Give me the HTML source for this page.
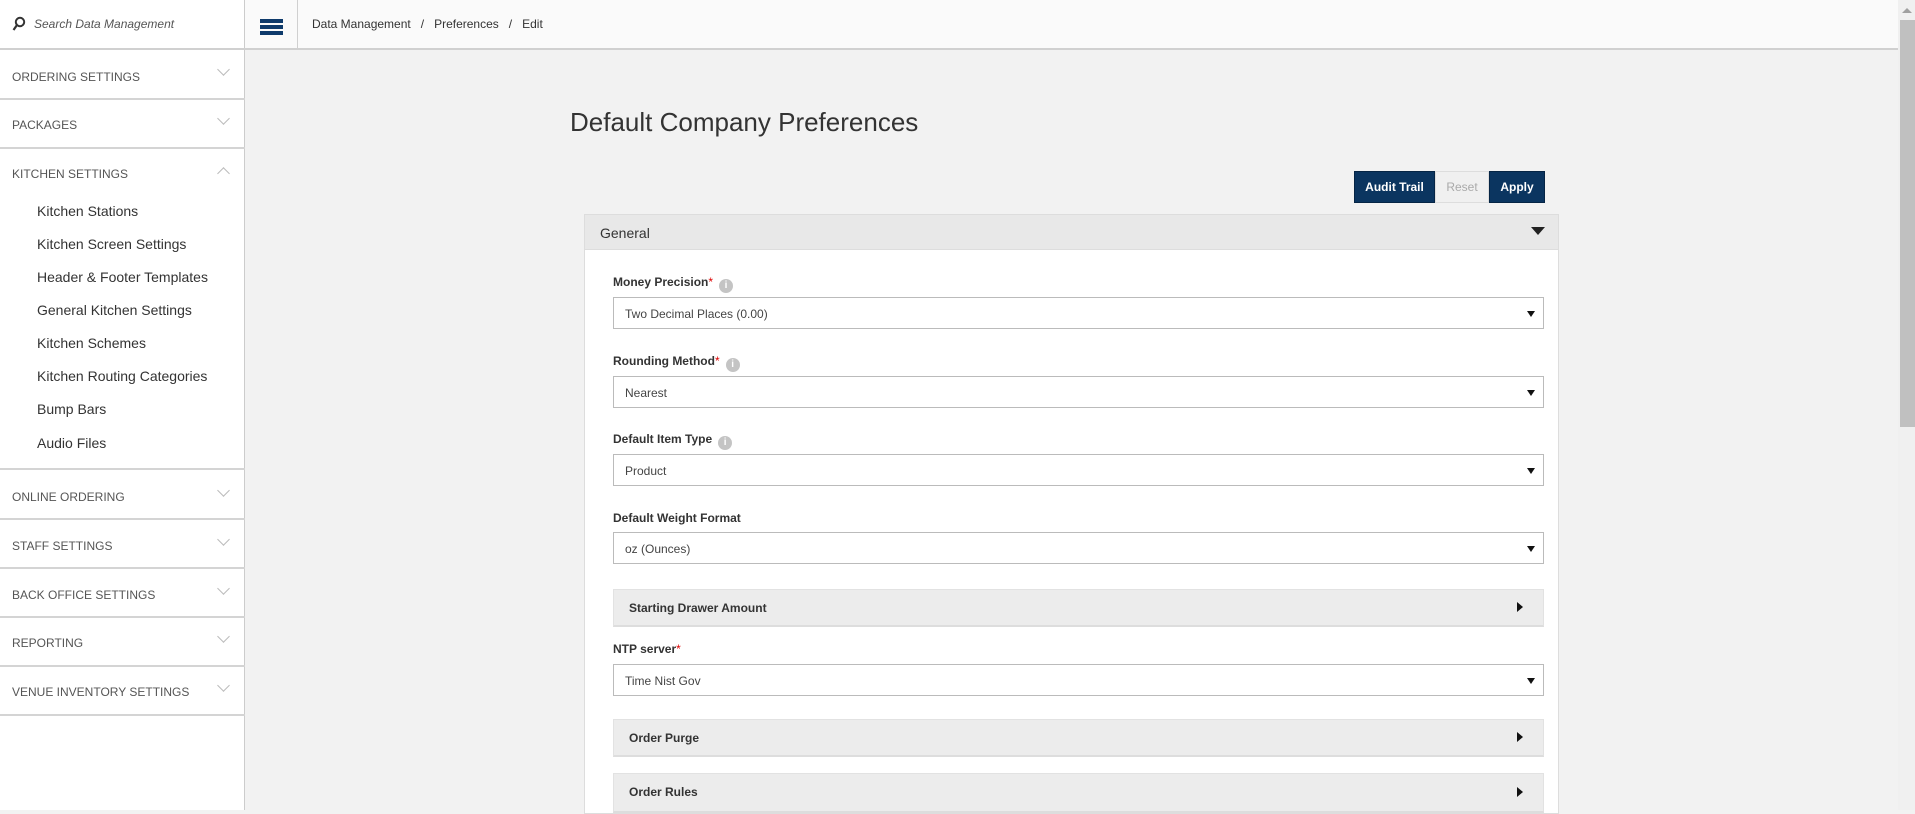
<!DOCTYPE html>
<html><head><meta charset="utf-8"><style>
*{box-sizing:border-box;margin:0;padding:0}
body{width:1915px;height:810px;overflow:hidden;background:#f2f2f2;font-family:"Liberation Sans",sans-serif;position:relative;color:#333}
.abs{position:absolute}
#side{left:0;top:0;width:245px;height:810px;background:#fff;border-right:1px solid #ccc}
.sh{position:absolute;left:12px;font-size:12px;color:#555;letter-spacing:0}
.chev{position:absolute;left:219px;width:9px;height:9px;border-right:1.5px solid #bbb;border-bottom:1.5px solid #bbb;transform:rotate(45deg)}
.chev.up{transform:rotate(-135deg)}
.line{position:absolute;left:0;width:245px;height:2px;background:#d4d4d4}
.si{position:absolute;left:37px;font-size:14px;color:#333}
#top{left:245px;top:0;width:1653px;height:50px;background:#fafafa;border-bottom:2px solid #d0d0d0}
.sel{position:absolute;left:613px;width:931px;height:32px;background:#fff;border:1px solid #bbb;font-size:12px;color:#444;padding:9px 11px}
.sel:after{content:"";position:absolute;right:8px;top:13px;border-left:4.5px solid transparent;border-right:4.5px solid transparent;border-top:6px solid #111}
.lbl{position:absolute;left:613px;font-size:12px;font-weight:bold;color:#333}
.lbl b{color:#d00;font-weight:normal}
.inf{display:inline-block;width:14px;height:14px;border-radius:50%;background:#c4c4c4;color:#fff;font-size:10px;text-align:center;line-height:14px;margin-left:6px;vertical-align:-2px;font-weight:bold}
.sub{position:absolute;left:613px;width:931px;background:#ececec;border:1px solid #e2e2e2;border-bottom:2px solid #ddd;font-size:12px;font-weight:bold;color:#333;padding-left:15px}
.sub:after{content:"";position:absolute;right:20px;top:50%;margin-top:-6px;border-top:5px solid transparent;border-bottom:5px solid transparent;border-left:6px solid #111}
</style></head><body>
<div id="side" class="abs">
 <div class="abs" style="left:0;top:0;width:245px;height:50px;border-bottom:2px solid #d0d0d0"></div>
 <svg class="abs" style="left:12px;top:16px" width="14" height="16" viewBox="0 0 14 16"><circle cx="8" cy="6" r="4.2" fill="none" stroke="#333" stroke-width="2"/><line x1="5" y1="9" x2="1.5" y2="14" stroke="#333" stroke-width="2.2"/></svg>
 <div class="abs" style="left:34px;top:17px;font-size:12px;font-style:italic;color:#555">Search Data Management</div>
 <div class="sh" style="top:70px">ORDERING SETTINGS</div><div class="chev" style="top:65px"></div>
 <div class="line" style="top:98px"></div>
 <div class="sh" style="top:118px">PACKAGES</div><div class="chev" style="top:114px"></div>
 <div class="line" style="top:147px"></div>
 <div class="sh" style="top:167px">KITCHEN SETTINGS</div><div class="chev up" style="top:169px"></div>
 <div class="si" style="top:203px">Kitchen Stations</div>
 <div class="si" style="top:236px">Kitchen Screen Settings</div>
 <div class="si" style="top:269px">Header &amp; Footer Templates</div>
 <div class="si" style="top:302px">General Kitchen Settings</div>
 <div class="si" style="top:335px">Kitchen Schemes</div>
 <div class="si" style="top:368px">Kitchen Routing Categories</div>
 <div class="si" style="top:401px">Bump Bars</div>
 <div class="si" style="top:435px">Audio Files</div>
 <div class="line" style="top:468px"></div>
 <div class="sh" style="top:490px">ONLINE ORDERING</div><div class="chev" style="top:486px"></div>
 <div class="line" style="top:518px"></div>
 <div class="sh" style="top:539px">STAFF SETTINGS</div><div class="chev" style="top:535px"></div>
 <div class="line" style="top:567px"></div>
 <div class="sh" style="top:588px">BACK OFFICE SETTINGS</div><div class="chev" style="top:584px"></div>
 <div class="line" style="top:616px"></div>
 <div class="sh" style="top:636px">REPORTING</div><div class="chev" style="top:632px"></div>
 <div class="line" style="top:665px"></div>
 <div class="sh" style="top:685px">VENUE INVENTORY SETTINGS</div><div class="chev" style="top:681px"></div>
 <div class="line" style="top:714px"></div>
</div>
<div id="top" class="abs">
 <div class="abs" style="left:52px;top:0;width:1px;height:48px;background:#d0d0d0"></div>
 <div class="abs" style="left:15px;top:19px;width:23px;height:4px;background:#0e3a6b"></div>
 <div class="abs" style="left:15px;top:25px;width:23px;height:4px;background:#0e3a6b"></div>
 <div class="abs" style="left:15px;top:31px;width:23px;height:4px;background:#0e3a6b"></div>
 <div class="abs" style="left:67px;top:17px;font-size:12px;color:#333">Data Management&nbsp;&nbsp; / &nbsp;&nbsp;Preferences&nbsp;&nbsp; / &nbsp;&nbsp;Edit</div>
</div>
<div class="abs" style="left:1898px;top:0;width:17px;height:810px;background:#f0f0f0"></div>
<div class="abs" style="left:1900px;top:20px;width:15px;height:407px;background:#c0c0c0"></div>
<div class="abs" style="left:1902px;top:8px;border-left:5px solid transparent;border-right:5px solid transparent;border-bottom:5px solid #a0a0a0"></div>
<div class="abs" style="left:570px;top:107px;font-size:26px;color:#333">Default Company Preferences</div>
<div class="abs" style="left:1354px;top:171px;width:81px;height:32px;background:#0b3560;border:1px solid #062545;color:#fff;font-size:12px;font-weight:bold;text-align:center;line-height:30px">Audit Trail</div>
<div class="abs" style="left:1435px;top:171px;width:54px;height:32px;background:#f0f0f0;border:1px solid #ddd;color:#aaa;font-size:12px;text-align:center;line-height:30px">Reset</div>
<div class="abs" style="left:1489px;top:171px;width:56px;height:32px;background:#0b3560;border:1px solid #062545;color:#fff;font-size:12px;font-weight:bold;text-align:center;line-height:30px">Apply</div>
<div class="abs" style="left:584px;top:214px;width:975px;height:600px;background:#fff;border:1px solid #ddd"></div>
<div class="abs" style="left:584px;top:214px;width:975px;height:36px;background:#e8e8e8;border:1px solid #ddd;font-size:14px;color:#333;padding:10px 15px">General</div>
<div class="abs" style="left:1531px;top:227px;border-left:7px solid transparent;border-right:7px solid transparent;border-top:8px solid #222"></div>
<div class="lbl" style="top:275px">Money Precision<b>*</b><span class="inf">i</span></div>
<div class="sel" style="top:297px">Two Decimal Places (0.00)</div>
<div class="lbl" style="top:354px">Rounding Method<b>*</b><span class="inf">i</span></div>
<div class="sel" style="top:376px">Nearest</div>
<div class="lbl" style="top:432px">Default Item Type<span class="inf">i</span></div>
<div class="sel" style="top:454px">Product</div>
<div class="lbl" style="top:511px">Default Weight Format</div>
<div class="sel" style="top:532px">oz (Ounces)</div>
<div class="sub" style="top:589px;height:38px;line-height:36px">Starting Drawer Amount</div>
<div class="lbl" style="top:642px">NTP server<b>*</b></div>
<div class="sel" style="top:664px">Time Nist Gov</div>
<div class="sub" style="top:719px;height:38px;line-height:36px">Order Purge</div>
<div class="sub" style="top:773px;height:40px;line-height:36px">Order Rules</div>
</body></html>
